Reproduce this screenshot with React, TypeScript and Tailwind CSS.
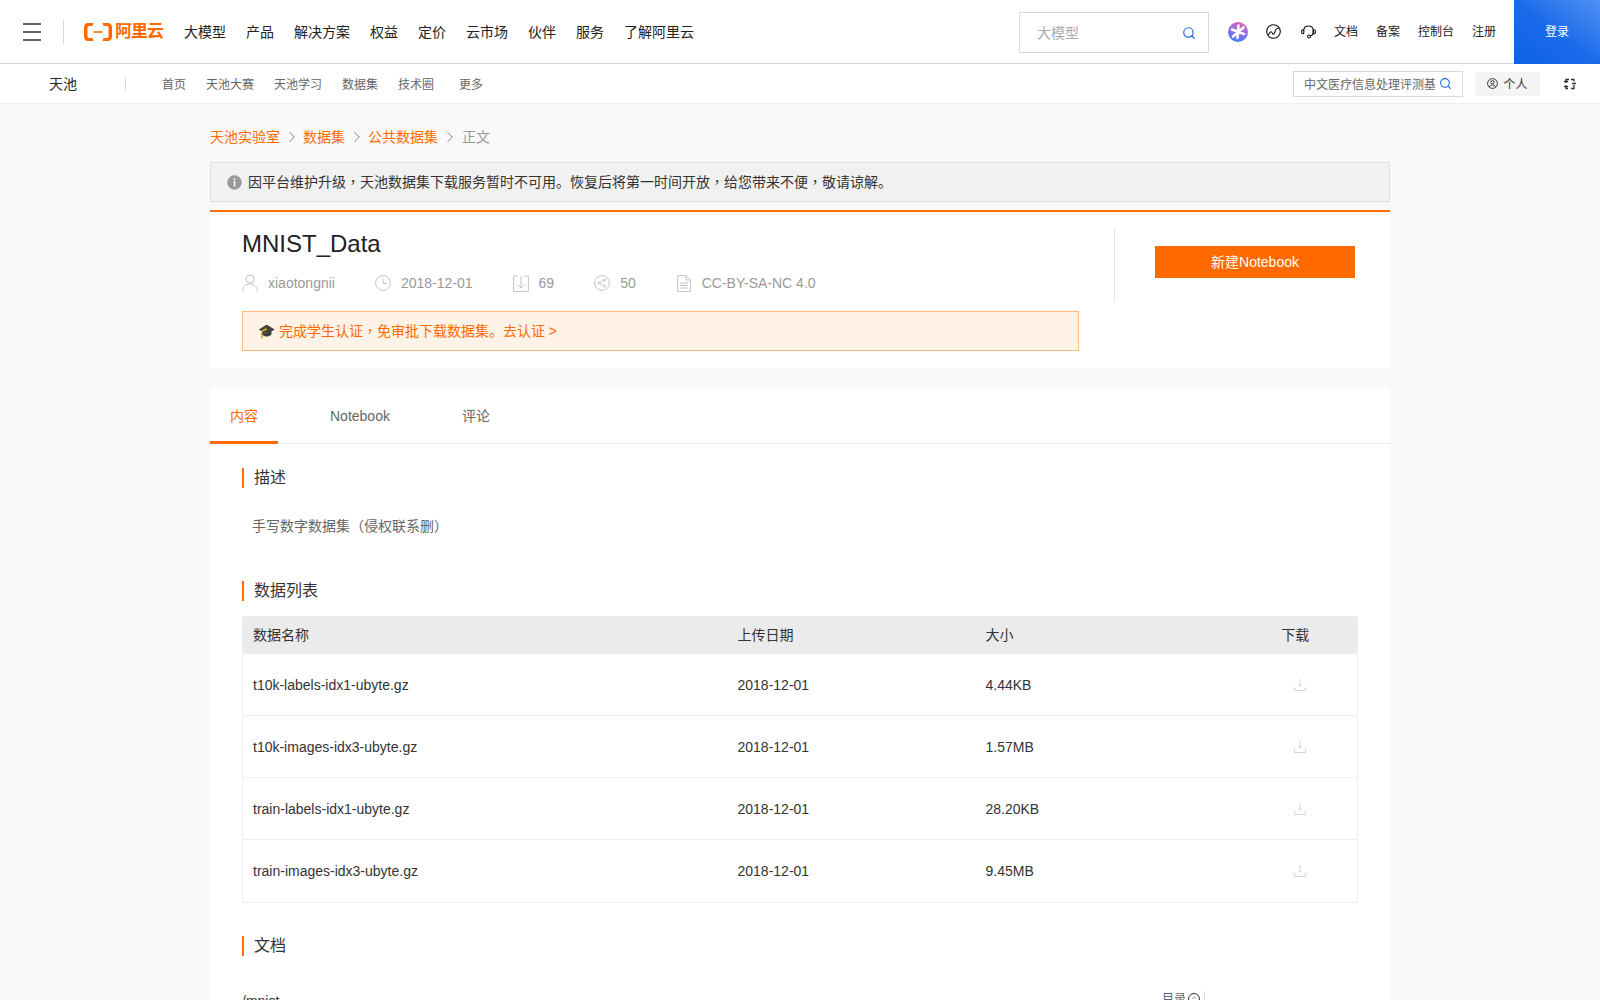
import React from 'react';
import { Search, ChevronRight } from 'lucide-react';

const topNav = ['大模型', '产品', '解决方案', '权益', '定价', '云市场', '伙伴', '服务', '了解阿里云'];

const files = [
  { name: 't10k-labels-idx1-ubyte.gz', date: '2018-12-01', size: '4.44KB', rowClass: 'h-[62px]' },
  { name: 't10k-images-idx3-ubyte.gz', date: '2018-12-01', size: '1.57MB', rowClass: 'h-[62px]' },
  { name: 'train-labels-idx1-ubyte.gz', date: '2018-12-01', size: '28.20KB', rowClass: 'h-[62px]' },
  { name: 'train-images-idx3-ubyte.gz', date: '2018-12-01', size: '9.45MB', rowClass: 'h-[63px]' },
];

// the reference's font centres the full-width comma in its cell
const Comma = () => <span className="font-['Noto_Sans_CJK_TC'] leading-none">，</span>;

const LogoMark = () => (
  <svg width="28" height="18" viewBox="0 0 28 18" fill="#ff6a00">
    <path d="M9.500 0H4C1.600 0 0 1.700 0 4v10c0 2.300 1.600 4 4 4h5.500l-1-3H5.300c-1.100 0-1.800-.7-1.800-1.800V4.800C3.500 3.700 4.200 3 5.300 3h3.200z" />
    <path d="M18.500 0H24c2.400 0 4 1.700 4 4v10c0 2.300-1.600 4-4 4h-5.500l1-3h3.200c1.100 0 1.800-.7 1.800-1.800V4.800C24.500 3.700 23.800 3 22.700 3h-3.200z" />
    <rect x="9.500" y="8.200" width="9" height="1.600" />
  </svg>
);

const GemIcon = () => (
  <svg width="20" height="20" viewBox="0 0 20 20">
    <defs>
      <linearGradient id="gem" x1="0.6" y1="0" x2="0.35" y2="1">
        <stop offset="0" stopColor="#d866b4" />
        <stop offset="0.5" stopColor="#8f6cec" />
        <stop offset="1" stopColor="#3a80f6" />
      </linearGradient>
    </defs>
    <circle cx="10" cy="10" r="10" fill="url(#gem)" />
    <path d="M10.500 3.500L9.500 16M4 7.500l12 4.500M15.500 5.500L5 14.500" stroke="#fff" strokeWidth="2.600" strokeLinecap="round" />
  </svg>
);

const GlobeIcon = () => (
  <svg width="15" height="15" viewBox="0 0 15 15" fill="none" stroke="#111" strokeWidth="1.100">
    <circle cx="7.500" cy="7.500" r="6.800" />
    <path d="M1.800 11c1.300-.6 1.800-3 3.200-3.200s1 2.700 2.500 2.500 1.300-3.500 2.300-4.800 2-1.700 3.500-1.500" />
  </svg>
);

const HeadsetIcon = () => (
  <svg width="15" height="14" viewBox="0 0 15 14" fill="none" stroke="#111" strokeWidth="1.100">
    <path d="M2.800 5.500C2.800 2.800 4.800 1 7.500 1s4.700 1.800 4.700 4.500v2.200c0 1.800-1.500 3-3.200 3.300" />
    <rect x="0.700" y="4.700" width="2.100" height="4" rx="1" />
    <circle cx="8" cy="11.500" r="1.500" />
    <rect x="12.200" y="4.700" width="2.100" height="4" rx="1" />
  </svg>
);

const SwapIcon = () => (
  <svg width="12" height="12" viewBox="0 0 12 12" fill="none" stroke="#333" strokeWidth="1.300">
    <path d="M2 5V1.500H5M2 7.500V10.500H4M7 1.500H10V3.500M10 7V10.500H7" />
    <path d="M0 3.500h4M8 5.500h4M0 8.500h4" />
  </svg>
);

const UserCircleIcon = () => (
  <svg width="11" height="11" viewBox="0 0 11 11" fill="none" stroke="#333" strokeWidth="1">
    <circle cx="5.500" cy="5.500" r="4.900" />
    <circle cx="5.500" cy="4.300" r="1.700" />
    <path d="M2.300 9c.6-1.400 1.700-2 3.200-2s2.600.6 3.200 2" />
  </svg>
);

const InfoDot = () => (
  <svg width="15" height="15" viewBox="0 0 15 15" className="shrink-0">
    <circle cx="7.500" cy="7.500" r="7.200" fill="#999" />
    <rect x="6.700" y="3.200" width="1.600" height="1.700" fill="#fff" />
    <rect x="6.700" y="6" width="1.600" height="5.600" fill="#fff" />
  </svg>
);

const PersonIcon = () => (
  <svg width="16" height="18" viewBox="0 0 16 18" fill="none" stroke="#c4c4c4" strokeWidth="1">
    <circle cx="8" cy="5" r="4" />
    <path d="M.6 17.500c0-4.500 3-7.500 7.400-7.500s7.400 3 7.400 7.500" />
  </svg>
);

const ClockIcon = () => (
  <svg width="16" height="16" viewBox="0 0 16 16" fill="none" stroke="#c4c4c4" strokeWidth="1">
    <circle cx="8" cy="8" r="7.400" />
    <path d="M8 3.500V8.500H12" />
  </svg>
);

const DownIcon = () => (
  <svg width="16" height="17" viewBox="0 0 16 17" fill="none" stroke="#c4c4c4" strokeWidth="1">
    <path d="M5 1H.6v15.400h14.800V1H11" />
    <path d="M8 1v11.500M4.500 9.500L8 13l3.500-3.500" />
  </svg>
);

const ShareIcon = () => (
  <svg width="16" height="16" viewBox="0 0 16 16" fill="none" stroke="#c4c4c4" strokeWidth="1">
    <circle cx="8" cy="8" r="7.400" />
    <circle cx="5" cy="8" r="1" />
    <circle cx="10.500" cy="5" r="1" />
    <circle cx="10.500" cy="11" r="1" />
    <path d="M5.900 7.500l3.700-2M5.900 8.500l3.700 2" />
  </svg>
);

const DocIcon = () => (
  <svg width="16" height="17" viewBox="0 0 16 17" fill="none" stroke="#c4c4c4" strokeWidth="1">
    <path d="M1.600.6H10L14.400 5v11.400H1.600z" />
    <path d="M10 .6V5h4.400M4 8h8M4 10.500h8M4 13h8" />
  </svg>
);

const DownloadIcon = () => (
  <svg width="12" height="12" viewBox="0 0 12 12" fill="none" stroke="#d4d4d4" strokeWidth="1">
    <path d="M6 0v7M4.300 5.500L6 7.200l1.700-1.700" />
    <path d="M.5 8v3.500h11V8" />
  </svg>
);

const SectionTitle = ({ children }: { children: React.ReactNode }) => (
  <h3 className="h-5 border-l-2 border-[#ff6a00] pl-2.5 text-base leading-5 text-[#333]">{children}</h3>
);

export default function App() {
  return (
    <div className="h-screen overflow-hidden bg-[#f9f9f9] font-['Liberation_Sans','Noto_Sans_CJK_SC',sans-serif]">
      {/* top bar */}
      <header className="flex h-16 items-center border-b border-[#d9d9d9] bg-white">
        <div className="ml-[23px] flex w-[18px] flex-col gap-1.5">
          <span className="h-0.5 bg-[#666]" />
          <span className="h-0.5 bg-[#666]" />
          <span className="h-0.5 bg-[#666]" />
        </div>
        <span className="ml-[22px] h-6 w-px bg-[#d9d9d9]" />
        <div className="ml-5 flex items-center gap-[3px]">
          <LogoMark />
          <span className="text-[17px] leading-none font-bold tracking-[-1px] text-[#ff6a00]">阿里云</span>
        </div>
        <nav className="ml-[21px] flex gap-5 text-sm text-[#222]">
          {topNav.map((item) => (
            <a key={item}>{item}</a>
          ))}
        </nav>
        <div className="mt-3 ml-auto flex h-[41px] w-[190px] items-center justify-between self-start border border-[#d9d9d9] pr-3 pl-[17px] text-sm text-[#aaa]">
          <span>大模型</span>
          <Search size={14} className="text-[#1a66e5]" />
        </div>
        <div className="ml-[19px] flex items-center text-xs text-[#222]">
          <GemIcon />
          <span className="ml-[18px] flex"><GlobeIcon /></span>
          <span className="ml-5 flex"><HeadsetIcon /></span>
          <a className="ml-[18px] pt-px">文档</a>
          <a className="ml-[18px] pt-px">备案</a>
          <a className="ml-[18px] pt-px">控制台</a>
          <a className="ml-[18px] pt-px">注册</a>
        </div>
        <button className="ml-[18px] h-16 w-[86px] bg-gradient-to-tr from-[#0f62e6] via-[#1a6bea] to-[#4f90f2] text-xs text-white">
          登录
        </button>
      </header>

      {/* tianchi sub nav */}
      <div className="flex h-10 items-center border-b border-[#eee] bg-white">
        <span className="ml-[49px] text-sm text-[#222]">天池</span>
        <span className="ml-[48px] h-3 w-px bg-[#d9d9d9]" />
        <nav className="ml-9 flex pt-0.5 text-xs text-[#666]">
          <a>首页</a>
          <a className="ml-5">天池大赛</a>
          <a className="ml-5">天池学习</a>
          <a className="ml-5">数据集</a>
          <a className="ml-5">技术圈</a>
          <a className="ml-[25px]">更多</a>
        </nav>
        <div className="ml-auto flex h-[26px] w-[170px] items-center justify-between border border-[#d9d9d9] pr-2.5 pl-2.5 text-xs text-[#666]">
          <span className="overflow-hidden pt-0.5 whitespace-nowrap">中文医疗信息处理评测基</span>
          <Search size={13} className="ml-1 shrink-0 text-[#1a66e5]" />
        </div>
        <div className="ml-3 flex h-6 w-[65px] items-center justify-center gap-[5px] bg-[#f4f4f4] text-xs text-[#333]">
          <UserCircleIcon />
          <span className="pt-0.5">个人</span>
        </div>
        <span className="mr-6 ml-6 flex"><SwapIcon /></span>
      </div>

      <main className="mx-auto w-[1180px]">
        {/* breadcrumb */}
        <div className="mt-[23px] flex h-5 items-center text-sm leading-5 text-[#ff6a00]">
          <a>天池实验室</a>
          <ChevronRight size={18} strokeWidth={1.200} className="mx-[2.500px] text-[#777]" />
          <a>数据集</a>
          <ChevronRight size={18} strokeWidth={1.200} className="mx-[2.500px] text-[#777]" />
          <a>公共数据集</a>
          <ChevronRight size={18} strokeWidth={1.200} className="mr-[3.500px] ml-[2.500px] text-[#777]" />
          <span className="text-[#999]">正文</span>
        </div>

        {/* notice */}
        <div className="mt-[15px] flex h-10 items-center gap-1.5 border border-[#ddd] bg-[#f1f1f1] pl-[16px] text-sm text-[#333]">
          <InfoDot />
          <span>
            因平台维护升级<Comma />天池数据集下载服务暂时不可用。恢复后将第一时间开放<Comma />给您带来不便<Comma />敬请谅解。
          </span>
        </div>

        {/* dataset header */}
        <section className="mt-2 flex h-[158px] border-t-2 border-[#ff6a00] bg-white">
          <div className="ml-8 w-[837px]">
            <h1 className="mt-4 text-2xl leading-8 text-[#222]">MNIST_Data</h1>
            <div className="mt-[13px] flex h-5 items-center text-sm text-[#999]">
              <PersonIcon />
              <span className="ml-2.5">xiaotongnii</span>
              <span className="ml-10 flex"><ClockIcon /></span>
              <span className="ml-2.5">2018-12-01</span>
              <span className="ml-10 flex"><DownIcon /></span>
              <span className="ml-2.5">69</span>
              <span className="ml-10 flex"><ShareIcon /></span>
              <span className="ml-2.5">50</span>
              <span className="ml-10 flex"><DocIcon /></span>
              <span className="ml-2.5">CC-BY-SA-NC 4.0</span>
            </div>
            <div className="mt-[18px] flex h-10 items-center border border-[#ffb97a] bg-[#fff2e6] pl-[15px] text-sm text-[#ff6a00]">
              <span>
                🎓 完成学生认证<Comma />免审批下载数据集。去认证 &gt;
              </span>
            </div>
          </div>
          <div className="mt-[17px] ml-[35px] h-[73px] w-px bg-[#e3e3e3]" />
          <div className="ml-10">
            <button className="mt-[34px] h-8 w-[200px] bg-[#ff6a00] text-sm text-white">新建Notebook</button>
          </div>
        </section>

        {/* tabs and content */}
        <section className="mt-5 bg-white pb-10">
          <div className="flex h-14 border-b border-[#eee] text-sm text-[#666]">
            <a className="flex h-14 items-center border-b-[3px] border-[#ff6a00] px-5 pt-[3px] text-[#ff6a00]">内容</a>
            <a className="ml-8 flex items-center px-5">Notebook</a>
            <a className="ml-8 flex items-center px-5">评论</a>
          </div>

          <div className="mt-6 px-8">
            <SectionTitle>描述</SectionTitle>
            <p className="mt-7 pl-2.5 text-sm leading-5 text-[#666]">手写数字数据集（侵权联系删）</p>

            <div className="mt-[45px]">
              <SectionTitle>数据列表</SectionTitle>
            </div>
            <table className="mt-[15px] w-[1116px] table-fixed border border-[#eee] text-left text-sm text-[#333]">
              <colgroup>
                <col className="w-[485px]" />
                <col className="w-[248px]" />
                <col />
                <col className="w-[114px]" />
              </colgroup>
              <thead>
                <tr className="h-[37px] bg-[#ebebeb]">
                  <th className="pl-2.5 font-normal">数据名称</th>
                  <th className="pl-2.5 font-normal">上传日期</th>
                  <th className="pl-2.5 font-normal">大小</th>
                  <th className="pr-2.5 text-center font-normal">下载</th>
                </tr>
              </thead>
              <tbody>
                {files.map((file) => (
                  <tr key={file.name} className={`${file.rowClass} border-t border-[#eee]`}>
                    <td className="pl-2.5">{file.name}</td>
                    <td className="pl-2.5">{file.date}</td>
                    <td className="pl-2.5">{file.size}</td>
                    <td>
                      <span className="flex justify-center"><DownloadIcon /></span>
                    </td>
                  </tr>
                ))}
              </tbody>
            </table>

            <div className="mt-[33px]">
              <SectionTitle>文档</SectionTitle>
            </div>
            <div className="mt-[35px] flex w-[963px] items-start justify-between text-sm text-[#333]">
              <span>/mnist</span>
              <span className="flex items-center gap-0.5 border-r border-[#ddd] pr-1 text-xs text-[#666]">
                目录
                <span className="flex h-3 w-3 items-center justify-center rounded-full border border-[#333] text-[8px]">^</span>
              </span>
            </div>
          </div>
        </section>
      </main>
    </div>
  );
}
